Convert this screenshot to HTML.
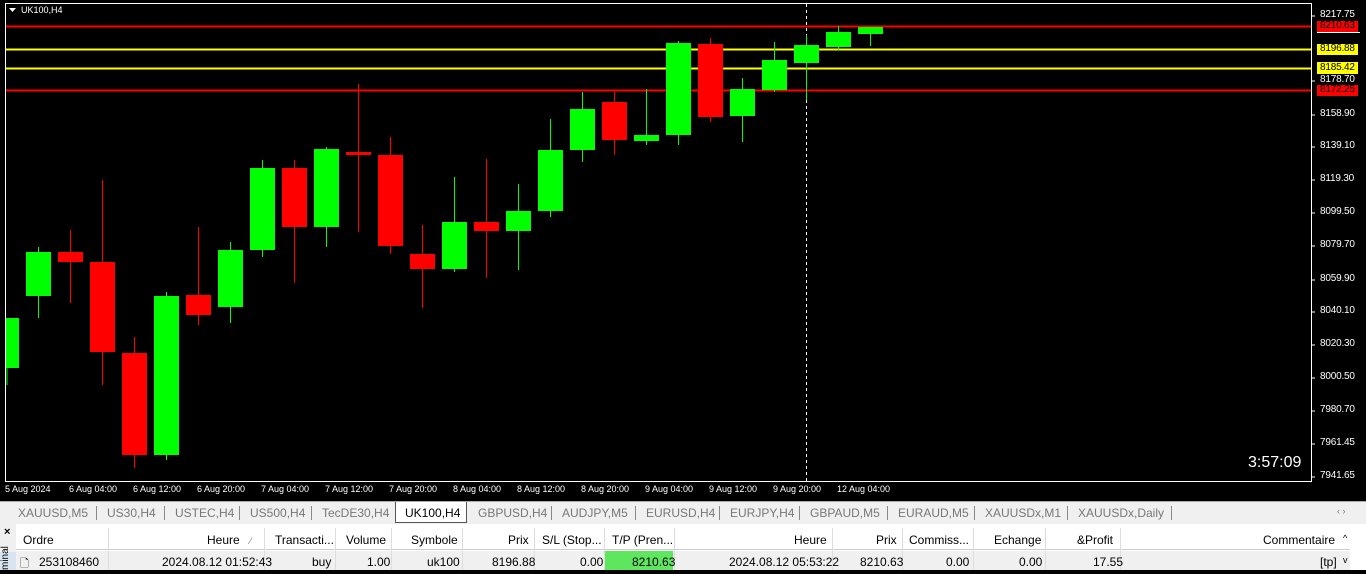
<!DOCTYPE html>
<html><head><meta charset="utf-8"><style>
*{margin:0;padding:0;box-sizing:border-box}
body{width:1366px;height:570px;overflow:hidden;background:#000;font-family:"Liberation Sans",sans-serif;position:relative}
.ax{position:absolute;color:#fff;font-size:10px;left:1320px;letter-spacing:-0.2px}
.tl{position:absolute;top:484px;color:#fff;font-size:9px}
.tabs{position:absolute;left:0;top:501px;width:1366px;height:23px;background:#f0f0f0;border-top:1px solid #aaa}
.tab{position:absolute;top:4px;font-size:12px;color:#777}
.sep{position:absolute;top:4px;width:1px;height:14px;background:#888}
.tbl{position:absolute;left:0;top:524px;width:1366px;height:46px;background:#fff}
.c{position:absolute;font-size:12px;color:#000;white-space:nowrap}
.hd{top:9px}.rw{top:31px}
.vs{position:absolute;top:4px;width:1px;height:42px;background:#ddd}
</style></head><body>
<svg width="1366" height="500" style="position:absolute;left:0;top:0">
<rect x="5.5" y="3.5" width="1306" height="478" fill="#000" stroke="#fff"/>
</svg>
<svg width="1366" height="500" style="position:absolute;left:0;top:0">
<line x1="6" y1="26.5" x2="1311" y2="26.5" stroke="#f00" stroke-width="2"/>
<line x1="6" y1="49.5" x2="1311" y2="49.5" stroke="#ff0" stroke-width="2"/>
<line x1="6" y1="68.5" x2="1311" y2="68.5" stroke="#ff0" stroke-width="2"/>
<line x1="6" y1="90.5" x2="1311" y2="90.5" stroke="#f00" stroke-width="2"/>
<line x1="806.5" y1="4" x2="806.5" y2="481" stroke="#fff" stroke-dasharray="3,3"/>
<line x1="7" y1="318" x2="7" y2="385" stroke="#0f0"/><rect x="6" y="318" width="13" height="50" fill="#0f0"/>
<g id="cs"></g>
<path d="M9 8h7l-3.5 4z" fill="#fff"/>
<text x="21" y="13" fill="#fff" font-size="9" font-family="Liberation Sans">UK100,H4</text>
<text x="1248" y="467" fill="#fff" font-size="16" font-family="Liberation Sans">3:57:09</text>
<g stroke="#fff"><line x1="1311" y1="16" x2="1315" y2="16"/><line x1="1311" y1="81" x2="1315" y2="81"/><line x1="1311" y1="115" x2="1315" y2="115"/><line x1="1311" y1="147" x2="1315" y2="147"/><line x1="1311" y1="180" x2="1315" y2="180"/><line x1="1311" y1="213" x2="1315" y2="213"/><line x1="1311" y1="246" x2="1315" y2="246"/><line x1="1311" y1="280" x2="1315" y2="280"/><line x1="1311" y1="312" x2="1315" y2="312"/><line x1="1311" y1="345" x2="1315" y2="345"/><line x1="1311" y1="378" x2="1315" y2="378"/><line x1="1311" y1="411" x2="1315" y2="411"/><line x1="1311" y1="444" x2="1315" y2="444"/><line x1="1311" y1="477" x2="1315" y2="477"/></g>
<rect x="1317" y="21" width="41" height="11" fill="#f00"/>
<rect x="1317" y="44" width="41" height="11" fill="#ff0"/>
<rect x="1317" y="62" width="41" height="12" fill="#ff0"/>
<rect x="1317" y="85" width="41" height="11" fill="#f00"/>
<line x1="1317" y1="32.5" x2="1360" y2="32.5" stroke="#fff"/>
</svg>
<script>
var d=[[38,252,296,247,318,1],[70,252,262,230,303,0],[102,262,352,180,385,0],[134,353,455,337,468,0],[166,296,455,292,460,1],[198,295,315,227,325,0],[230,250,307,242,323,1],[262,168,250,160,257,1],[294,168,227,160,283,0],[326,149,227,147,247,1],[358,152,155,84,232,0],[390,155,246,137,254,0],[422,254,269,225,308,0],[454,222,269,177,272,1],[486,222,231,159,278,0],[518,211,231,184,270,1],[550,150,211,119,217,1],[582,109,150,92,162,1],[614,102,140,92,155,0],[646,135,141,89,145,1],[678,43,135,41,145,1],[710,44,117,38,122,0],[742,89,116,78,142,1],[774,60,90,42,92,1],[806,45,63,35,100,1],[838,32,47,26,50,1],[870,27,34,27,46,1]];
var s='';d.forEach(function(a){var c=a[5]?'#0f0':'#f00';s+='<line x1="'+(a[0]+.5)+'" y1="'+a[3]+'" x2="'+(a[0]+.5)+'" y2="'+a[4]+'" stroke="'+c+'"/><rect x="'+(a[0]-12)+'" y="'+a[1]+'" width="25" height="'+Math.max(2,a[2]-a[1])+'" fill="'+c+'"/>';});
document.getElementById('cs').innerHTML=s;
</script>
<div class="ax" style="top:9px">8217.75</div>
<div class="ax" style="top:20px;color:#000">8210.63</div>
<div class="ax" style="top:43px;color:#000">8196.88</div>
<div class="ax" style="top:62px;color:#000">8185.42</div>
<div class="ax" style="top:74px">8178.70</div>
<div class="ax" style="top:84px;color:#000">8172.25</div>
<div class="ax" style="top:108px">8158.90</div>
<div class="ax" style="top:140px">8139.10</div>
<div class="ax" style="top:173px">8119.30</div>
<div class="ax" style="top:206px">8099.50</div>
<div class="ax" style="top:239px">8079.70</div>
<div class="ax" style="top:273px">8059.90</div>
<div class="ax" style="top:305px">8040.10</div>
<div class="ax" style="top:338px">8020.30</div>
<div class="ax" style="top:371px">8000.50</div>
<div class="ax" style="top:404px">7980.70</div>
<div class="ax" style="top:437px">7961.45</div>
<div class="ax" style="top:470px">7941.65</div>
<div class="tl" style="left:5px">5 Aug 2024</div>
<div class="tl" style="left:69px">6 Aug 04:00</div>
<div class="tl" style="left:133px">6 Aug 12:00</div>
<div class="tl" style="left:197px">6 Aug 20:00</div>
<div class="tl" style="left:261px">7 Aug 04:00</div>
<div class="tl" style="left:325px">7 Aug 12:00</div>
<div class="tl" style="left:389px">7 Aug 20:00</div>
<div class="tl" style="left:453px">8 Aug 04:00</div>
<div class="tl" style="left:517px">8 Aug 12:00</div>
<div class="tl" style="left:581px">8 Aug 20:00</div>
<div class="tl" style="left:645px">9 Aug 04:00</div>
<div class="tl" style="left:709px">9 Aug 12:00</div>
<div class="tl" style="left:773px">9 Aug 20:00</div>
<div class="tl" style="left:837px">12 Aug 04:00</div>
<div class="tabs">
<div class="tab" style="left:18px">XAUUSD,M5</div><div class="sep" style="left:96px"></div>
<div class="tab" style="left:107px">US30,H4</div><div class="sep" style="left:164px"></div>
<div class="tab" style="left:175px">USTEC,H4</div><div class="sep" style="left:239px"></div>
<div class="tab" style="left:250px">US500,H4</div><div class="sep" style="left:311px"></div>
<div class="tab" style="left:322px">TecDE30,H4</div>
<div style="position:absolute;left:395px;top:0;width:72px;height:21px;background:#fff;border:1px solid #555;border-top:none"></div>
<div class="tab" style="left:405px;color:#000">UK100,H4</div>
<div class="tab" style="left:478px">GBPUSD,H4</div><div class="sep" style="left:551px"></div>
<div class="tab" style="left:562px">AUDJPY,M5</div><div class="sep" style="left:635px"></div>
<div class="tab" style="left:646px">EURUSD,H4</div><div class="sep" style="left:719px"></div>
<div class="tab" style="left:730px">EURJPY,H4</div><div class="sep" style="left:799px"></div>
<div class="tab" style="left:810px">GBPAUD,M5</div><div class="sep" style="left:887px"></div>
<div class="tab" style="left:898px">EURAUD,M5</div><div class="sep" style="left:974px"></div>
<div class="tab" style="left:985px">XAUUSDx,M1</div><div class="sep" style="left:1067px"></div>
<div class="tab" style="left:1078px">XAUUSDx,Daily</div><div class="sep" style="left:1171px"></div>
<div class="tab" style="left:1337px;font-size:9px">‹ ›</div>
</div>
<div class="tbl">
<div style="position:absolute;left:0;top:0;width:16px;height:46px;background:#f0f0f0"></div>
<div style="position:absolute;left:4px;top:2px;font-size:11px;font-weight:bold">×</div>
<div style="position:absolute;left:0;top:28px;width:16px;height:18px;background:#d8e4f0;font-size:10px;writing-mode:vertical-rl;transform:rotate(180deg)">minal</div>
<div style="position:absolute;left:16px;top:3px;width:1334px;height:23px;border-bottom:1px solid #ccc;background:#fff"></div>
<div style="position:absolute;left:16px;top:27px;width:1334px;height:19px;background:#f0f0f0"></div>
<div style="position:absolute;left:605px;top:27px;width:68px;height:19px;background:#5ee65e"></div>
<div class="vs" style="left:108px"></div><div class="vs" style="left:264px"></div><div class="vs" style="left:335px"></div><div class="vs" style="left:391px"></div><div class="vs" style="left:462px"></div><div class="vs" style="left:534px"></div><div class="vs" style="left:604px"></div><div class="vs" style="left:674px"></div><div class="vs" style="left:832px"></div><div class="vs" style="left:902px"></div><div class="vs" style="left:973px"></div><div class="vs" style="left:1045px"></div><div class="vs" style="left:1120px"></div>
<div class="c hd" style="left:23px">Ordre</div>
<div class="c hd" style="left:207px">Heure&nbsp;&nbsp;&nbsp;<span style="font-size:9px;color:#777">⁄</span></div>
<div class="c hd" style="left:275px">Transacti...</div>
<div class="c hd" style="left:346px">Volume</div>
<div class="c hd" style="left:411px">Symbole</div>
<div class="c hd" style="left:508px">Prix</div>
<div class="c hd" style="left:542px">S/L (Stop...</div>
<div class="c hd" style="left:612px">T/P (Pren...</div>
<div class="c hd" style="left:794px">Heure</div>
<div class="c hd" style="left:876px">Prix</div>
<div class="c hd" style="left:909px">Commiss...</div>
<div class="c hd" style="left:994px">Echange</div>
<div class="c hd" style="left:1077px">&amp;Profit</div>
<div class="c hd" style="left:1263px">Commentaire</div>
<div class="c hd" style="left:1343px;font-size:9px">^</div>
<div class="c rw" style="left:20px;font-size:11px">🗋</div>
<div class="c rw" style="left:39px">253108460</div>
<div class="c rw" style="left:162px">2024.08.12 01:52:43</div>
<div class="c rw" style="left:312px">buy</div>
<div class="c rw" style="left:367px">1.00</div>
<div class="c rw" style="left:427px">uk100</div>
<div class="c rw" style="left:492px">8196.88</div>
<div class="c rw" style="left:580px">0.00</div>
<div class="c rw" style="left:632px">8210.63</div>
<div class="c rw" style="left:729px">2024.08.12 05:53:22</div>
<div class="c rw" style="left:860px">8210.63</div>
<div class="c rw" style="left:946px">0.00</div>
<div class="c rw" style="left:1019px">0.00</div>
<div class="c rw" style="left:1093px">17.55</div>
<div class="c rw" style="left:1320px">[tp]</div>
<div class="c rw" style="left:1343px;font-size:9px">v</div>
</div>
</body></html>
